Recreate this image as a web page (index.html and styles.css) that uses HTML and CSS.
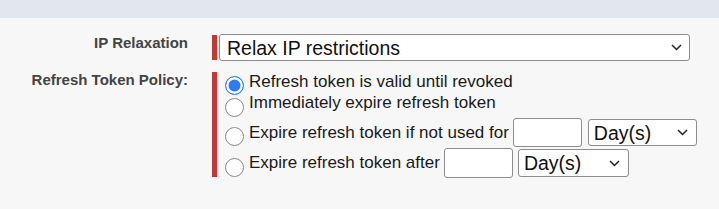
FILE: index.html
```html
<!DOCTYPE html>
<html lang="en">
<head>
    <meta charset="UTF-8">
    <title>OAuth Policies</title>
    <link rel="stylesheet" href="styles.css">
</head>
<body>
    <div class="top-band"></div>
    <div class="form">
        <label class="field-label" for="ipRelax">IP Relaxation</label>
        <div class="required">
            <span class="req-bar"></span>
            <select id="ipRelax" class="select-wide">
                <option>Relax IP restrictions</option>
            </select>
        </div>

        <div class="field-label">Refresh Token Policy:</div>
        <div class="required">
            <span class="req-bar"></span>
            <div class="radio-group">
                <label class="radio-row row-a">
                    <input type="radio" name="refresh" checked>
                    <span>Refresh token is valid until revoked</span>
                </label>
                <label class="radio-row row-b">
                    <input type="radio" name="refresh">
                    <span>Immediately expire refresh token</span>
                </label>
                <div class="radio-row row-c">
                    <input type="radio" name="refresh">
                    <span>Expire refresh token if not used for</span>
                    <input type="text" class="num-input">
                    <select class="select-unit">
                        <option>Day(s)</option>
                    </select>
                </div>
                <div class="radio-row row-d">
                    <input type="radio" name="refresh">
                    <span>Expire refresh token after</span>
                    <input type="text" class="num-input">
                    <select class="select-unit">
                        <option>Day(s)</option>
                    </select>
                </div>
            </div>
        </div>
    </div>
</body>
</html>
```

FILE: styles.css
```css
body {
    margin: 0;
    height: 209px;
    background-color: #f7f7f7;
    font-family: "Liberation Sans", Arial, sans-serif;
    color: #1a1a1a;
    overflow: hidden;
}
.top-band {
    height: 18px;
    background-color: #e2e6ee;
}
.form {
    display: grid;
    grid-template-columns: 188px 1fr;
    column-gap: 24px;
    row-gap: 10px;
    padding-top: 16px;
}
.field-label {
    text-align: right;
    font-size: 15px;
    font-weight: bold;
    color: #444;
    line-height: 18px;
}
.required {
    display: flex;
    align-items: stretch;
}
.req-bar {
    width: 5px;
    margin: 1px 0;
    background-color: #c23934;
    flex-shrink: 0;
}
select {
    appearance: none;
    -webkit-appearance: none;
    font-family: "Liberation Sans", Arial, sans-serif;
    color: #111;
    background-color: #fff;
    border: 1px solid #8c8c8c;
    border-radius: 3px;
    background-image: url("data:image/svg+xml;utf8,<svg xmlns='http://www.w3.org/2000/svg' width='11' height='7' viewBox='0 0 11 7'><path d='M1 1l4.5 4.5L10 1' fill='none' stroke='%23222' stroke-width='1.5'/></svg>");
    background-repeat: no-repeat;
    margin: 0;
}
.select-wide {
    margin-left: 2px;
    width: 471px;
    height: 27px;
    font-size: 19.5px;
    padding: 0 0 0 7px;
    background-position: right 7px center;
}
.radio-group {
    display: flex;
    flex-direction: column;
    font-size: 17px;
}
.radio-row {
    display: flex;
    align-items: center;
    white-space: nowrap;
}
.row-a {
    height: 21px;
}
.row-b {
    height: 22px;
}
.row-c {
    height: 29px;
    margin-top: 4px;
}
.row-d {
    height: 30px;
    margin-top: 1px;
}
input[type="radio"] {
    appearance: none;
    -webkit-appearance: none;
    box-sizing: border-box;
    width: 19px;
    height: 19px;
    margin: 8px 5px 0 8px;
    border: 1px solid #8a8a8a;
    border-radius: 50%;
    background-color: #fff;
    flex-shrink: 0;
}
input[type="radio"]:checked {
    border: 1.5px solid #2f7bf6;
    background-color: #2f7bf6;
    box-shadow: inset 0 0 0 2.5px #fff;
}
.num-input {
    width: 69px;
    height: 100%;
    box-sizing: border-box;
    margin-left: 4px;
    border: 1px solid #8c8c8c;
    border-radius: 3px;
    background-color: #fff;
}
.select-unit {
    height: 28px;
    font-size: 19.5px;
    padding: 0 0 0 5px;
    background-position: right 8px center;
}
.row-c .select-unit {
    width: 109px;
    margin-left: 6px;
    height: 27px;
}
.row-d .select-unit {
    width: 111px;
    margin-left: 5px;
}
```
